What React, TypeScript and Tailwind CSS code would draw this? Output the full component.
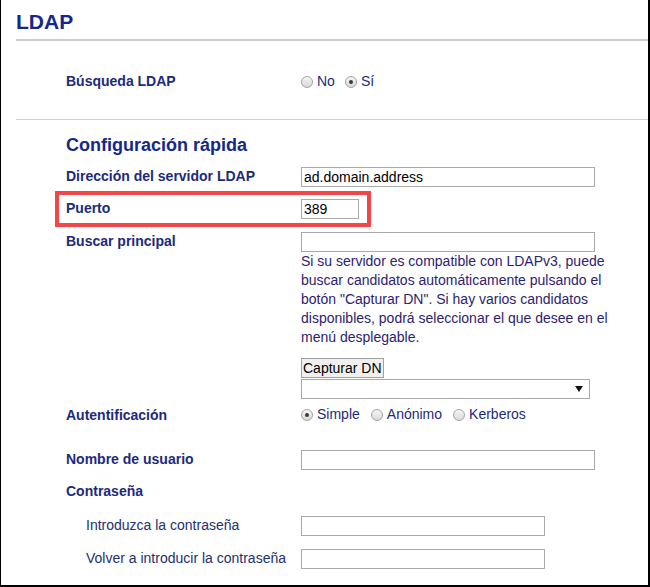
const Radio = ({ checked = false }: { checked?: boolean }) => (
  <span className="relative inline-flex h-[12px] w-[12px] shrink-0 items-center justify-center rounded-full border border-[#a3a3a3] bg-gradient-to-b from-[#f6f6f6] to-[#d9d9d9]">
    {checked && <span className="h-[4px] w-[4px] rounded-full bg-[#3a3a3a]" />}
  </span>
);

const Option = ({ label, checked }: { label: string; checked?: boolean }) => (
  <label className="flex items-center gap-[4px]">
    <Radio checked={checked} />
    <span>{label}</span>
  </label>
);

const TextBox = ({ value = '', width }: { value?: string; width: string }) => (
  <div
    className={`flex h-[20px] items-center border border-[#a9a9a9] bg-white pl-[2px] text-[14px] leading-none text-black ${width}`}
  >
    {value}
  </div>
);

const Row = ({
  label,
  children,
  className = '',
  sub = false,
}: {
  label: string;
  children?: React.ReactNode;
  className?: string;
  sub?: boolean;
}) => (
  <div className={`grid grid-cols-[235px_1fr] pl-[65px] ${className}`}>
    <div
      className={`text-[14px] leading-[19px] text-[#1c2a7c] ${
        sub ? 'pl-[20px] font-normal text-[#24306f]' : 'font-bold'
      }`}
    >
      {label}
    </div>
    <div>{children}</div>
  </div>
);

export default function App() {
  return (
    <div className="box-border h-[587px] w-[650px] overflow-hidden border-b-2 border-l border-r-2 border-black bg-white font-['Liberation_Sans',Arial,sans-serif]">
      <h1 className="pl-[15px] pt-[10px] text-[21px] font-bold leading-[24px] text-[#13288a]">LDAP</h1>
      <div className="ml-[15px] mt-[5px] h-[2px] bg-[#cccccc]" />

      <Row label="Búsqueda LDAP" className="mt-[31px]">
        <div className="flex h-[19px] items-center gap-[10px] text-[14px] text-[#1c2a7c]">
          <Option label="No" />
          <Option label="Sí" checked />
        </div>
      </Row>

      <div className="ml-[15px] mt-[28px] h-px bg-[#d3d3d3]" />

      <h2 className="mt-[14px] pl-[65px] text-[18px] font-bold leading-[22px] text-[#13288a]">
        Configuración rápida
      </h2>

      <Row label="Dirección del servidor LDAP" className="mt-[11px]">
        <TextBox value="ad.domain.address" width="w-[294px]" />
      </Row>

      <div className="relative mt-[12px]">
        <Row label="Puerto">
          <TextBox value="389" width="w-[58px]" />
        </Row>
        <div className="pointer-events-none absolute left-[54px] top-[-8px] h-[36px] w-[316px] border-4 border-[#f44646]" />
      </div>

      <Row label="Buscar principal" className="mt-[13px]">
        <TextBox width="w-[294px]" />
        <p className="w-[326px] text-[14px] leading-[19px] text-[#2e2270]">
          Si su servidor es compatible con LDAPv3, puede buscar candidatos automáticamente pulsando el botón
          "Capturar DN". Si hay varios candidatos disponibles, podrá seleccionar el que desee en el menú
          desplegable.
        </p>
        <button className="mt-[11px] flex h-[20px] items-center border border-[#a0a0a0] bg-[#f0f0f0] px-px text-[14px] leading-none text-black">
          Capturar DN
        </button>
        <div className="mt-px flex h-[20px] w-[289px] items-center justify-end border border-[#a9a9a9] bg-white pr-[6px]">
          <svg width="8" height="6" viewBox="0 0 8 6">
            <path d="M0 0h8L4 6z" fill="#111" />
          </svg>
        </div>
      </Row>

      <Row label="Autentificación" className="mt-[7px]">
        <div className="flex h-[17px] items-center gap-[11px] text-[14px] text-[#1c2a7c]">
          <Option label="Simple" checked />
          <Option label="Anónimo" />
          <Option label="Kerberos" />
        </div>
      </Row>

      <Row label="Nombre de usuario" className="mt-[25px]">
        <TextBox width="w-[294px]" />
      </Row>

      <Row label="Contraseña" className="mt-[12px]" />

      <Row label="Introduzca la contraseña" sub className="mt-[15px]">
        <TextBox width="w-[244px]" />
      </Row>

      <Row label="Volver a introducir la contraseña" sub className="mt-[13px]">
        <TextBox width="w-[244px]" />
      </Row>
    </div>
  );
}
